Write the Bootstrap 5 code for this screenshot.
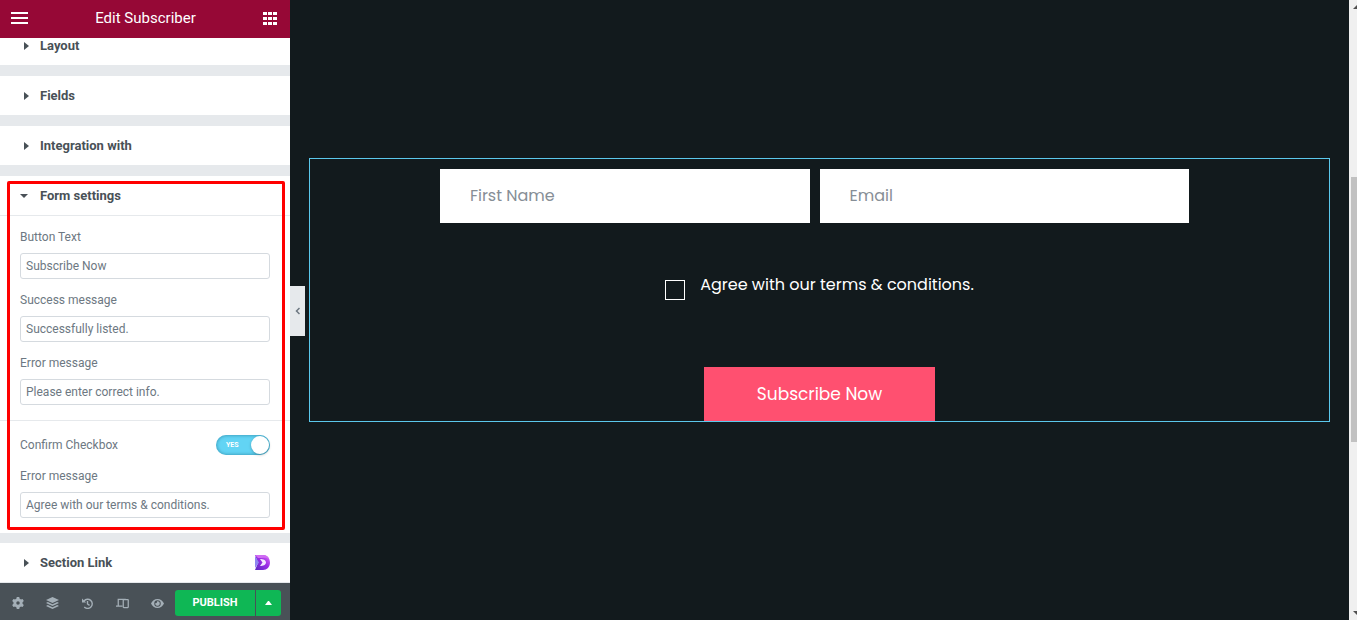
<!DOCTYPE html>
<html lang="en">
<head>
<meta charset="utf-8">
<meta name="viewport" content="width=device-width, initial-scale=1">
<title>Edit Subscriber</title>
<link rel="stylesheet" href="https://cdn.jsdelivr.net/npm/bootstrap@5.3.0/dist/css/bootstrap.min.css">
<style>
  body { font-family: Roboto, "Liberation Sans", sans-serif; font-size: 12px; line-height: 12px; color: #6d7882; background: #121a1d; }
  svg { display: block; }
  .panel { width: 290px; background: #e6e9ec; }
  .panel-head { height: 38px; padding: 0 13px 2px 11px; background: #960836; z-index: 1; }
  .panel-head h1 { font-size: 15px; line-height: 20px; }
  .bare { border: 0; padding: 0; background: none; color: inherit; }
  .sections { gap: 11px; }
  .sections > :first-child { margin-top: -12px; }
  .sec-btn { height: 39px; padding: 0 20px; font-size: 13px; font-weight: 700; color: #495157; background: #fff; }
  .sec-btn .caret { width: 20px; }
  .sec-body { padding: 15px 0; border-top: 1px solid #e6e9ec; }
  .settings { margin-bottom: -1px; }
  .ctl { padding: 0 20px; }
  .stack { gap: 15px; }
  .ctl label { display: block; margin-bottom: 10px; }
  .ctl .form-control { height: 26px; padding: 0 5px; font-size: 12px; border-color: #d5dadf; border-radius: 3px; color: #6d7882; }
  .divided { border-top: 1px solid #e6e9ec; padding-top: 14px; }
  .ctl .plain-label { margin: 0; }
  .switch-wrap { width: 54px; height: 20px; }
  .switch { appearance: none; margin: 0; width: 100%; height: 100%; border-radius: 10px; background: #62d4f4; box-shadow: inset 0 0 3px 1px rgba(20,100,130,.4); }
  .switch::after { content: ""; position: absolute; right: 1px; top: 1px; width: 18px; height: 18px; border-radius: 50%; background: #fff; box-shadow: 0 1px 3px rgba(0,0,0,.25); }
  .switch-text { left: 10px; top: 4px; font-size: 7px; font-weight: 700; color: #fff; pointer-events: none; }
  .highlight { left: 7px; top: 5px; right: 5px; bottom: 3px; border: 3px solid #f00; border-radius: 2px; pointer-events: none; }
  .panel-foot { height: 37px; background: #495157; color: #a4afb7; padding: 3px 9px 0 0; }
  .tool { width: 35px; height: 26px; }
  .pub { height: 26px; background: #0fb755; color: #fff; font-size: 11px; font-weight: 700; border: 0; padding: 0; }
  .pub-main { width: 80px; border-radius: 3px 0 0 3px; }
  .pub-more { width: 25px; border-radius: 0 3px 3px 0; }
  .collapse-tab { left: 0; top: 286px; width: 15px; height: 50px; background: #e6e9ec; color: #6d7882; }
  .preview { padding: 158px 19px 0; font-family: Poppins, Inter, "Open Sans", sans-serif; font-size: 16px; line-height: 24px; }
  .widget { border: 1px solid #5bc8ec; padding: 10px 10px 0; }
  .fields { width: 76%; }
  .fields > div { flex: 1 1 0; padding-right: 10px; }
  .fields .form-control { height: 54px; padding: 0 30px 2px; border: 0; border-radius: 0; font-size: 16px; }
  .fields .form-control::placeholder { color: #868e96; }
  .agree { gap: 15px; min-width: 305px; margin: 50px 0 67px; color: #fff; }
  .agree input { appearance: none; width: 20px; height: 20px; margin: 7px 0 0; border: 1px solid #fff; }
  .subscribe { width: 231px; height: 54px; border: 0; background: #ff5070; color: #fff; font-size: 17px; }
  .rail { width: 8px; background: #f0f0f0; padding: 0 0 0 2px; }
  .rail-thumb { margin-top: 168px; height: 265px; background: #c1c1c1; }
</style>
<script src="https://cdn.jsdelivr.net/npm/bootstrap@5.3.0/dist/js/bootstrap.bundle.min.js"></script>
</head>
<body>
<div class="d-flex vh-100 overflow-hidden">

  <aside class="panel d-flex flex-column flex-shrink-0">
    <header class="panel-head d-flex align-items-center justify-content-between text-white flex-shrink-0">
      <button class="bare" aria-label="Menu"><svg width="17" height="12" fill="#fff"><path d="M0 0h17v2H0zM0 5h17v2H0zM0 10h17v2H0z"/></svg></button>
      <h1 class="m-0 fw-normal">Edit Subscriber</h1>
      <button class="bare" aria-label="Widgets"><svg width="14" height="13" fill="#fff"><path d="M0 0h4v3H0zM5 0h4v3H5zM10 0h4v3h-4zM0 5h4v3H0zM5 5h4v3H5zM10 5h4v3h-4zM0 10h4v3H0zM5 10h4v3H5zM10 10h4v3h-4z"/></svg></button>
    </header>

    <div class="sections d-flex flex-column flex-grow-1 overflow-hidden">
      <button class="bare sec-btn d-flex align-items-center flex-shrink-0"><span class="caret"><svg width="12" height="8" fill="#495157"><path d="M4 0l5 4-5 4z"/></svg></span>Layout</button>
      <button class="bare sec-btn d-flex align-items-center flex-shrink-0"><span class="caret"><svg width="12" height="8" fill="#495157"><path d="M4 0l5 4-5 4z"/></svg></span>Fields</button>
      <button class="bare sec-btn d-flex align-items-center flex-shrink-0"><span class="caret"><svg width="12" height="8" fill="#495157"><path d="M4 0l5 4-5 4z"/></svg></span>Integration with</button>

      <section class="settings bg-white position-relative flex-shrink-0">
        <button class="bare sec-btn d-flex align-items-center w-100" aria-expanded="true"><span class="caret"><svg width="12" height="8" fill="#495157"><path d="M0 2h8l-4 4z"/></svg></span>Form settings</button>
        <div class="sec-body stack d-flex flex-column">
          <div class="ctl"><label for="btnText">Button Text</label><input id="btnText" class="form-control" type="text" value="Subscribe Now"></div>
          <div class="ctl"><label for="okMsg">Success message</label><input id="okMsg" class="form-control" type="text" value="Successfully listed."></div>
          <div class="ctl"><label for="errMsg">Error message</label><input id="errMsg" class="form-control" type="text" value="Please enter correct info."></div>
          <div class="ctl divided d-flex align-items-center justify-content-between">
            <label class="plain-label" for="confirm">Confirm Checkbox</label>
            <span class="switch-wrap position-relative"><input id="confirm" class="switch position-absolute" type="checkbox" role="switch" checked><span class="switch-text position-absolute">YES</span></span>
          </div>
          <div class="ctl"><label for="termsMsg">Error message</label><input id="termsMsg" class="form-control" type="text" value="Agree with our terms &amp; conditions."></div>
        </div>
        <div class="highlight position-absolute"></div>
      </section>

      <button class="bare sec-btn d-flex align-items-center flex-shrink-0"><span class="caret"><svg width="12" height="8" fill="#495157"><path d="M4 0l5 4-5 4z"/></svg></span>Section Link
        <svg class="ms-auto" width="15" height="15" viewBox="0 0 15 15"><defs><linearGradient id="lg" x1="0" y1="1" x2="1" y2="0"><stop offset="0" stop-color="#5a2bc0"/><stop offset=".55" stop-color="#9a2ce6"/><stop offset="1" stop-color="#e070f5"/></linearGradient></defs><path fill="url(#lg)" d="M0 0h8c4 0 7 3 7 7.500s-3 7.500-7 7.500H0l3-7z"/><path fill="#cf6cf2" d="M0 0h8c3 0 5 1 6 4-3-2-7-1-11-1z"/><path fill="#8f86f0" d="M0 1l4 6.500L0 13z"/><path fill="#f4e8ff" d="M5 4c3 0 6 1 6 3.500S8 11 5 11l2.500-3.500z"/></svg></button>
    </div>

    <footer class="panel-foot d-flex align-items-center flex-shrink-0">
      <button class="bare tool d-flex align-items-center justify-content-center" aria-label="Settings"><svg width="12" height="12" viewBox="0 0 24 24"><g fill="currentColor"><path fill-rule="evenodd" d="M12 3a9 9 0 1 0 0 18 9 9 0 0 0 0-18zm0 5.500a3.500 3.500 0 1 1 0 7 3.500 3.500 0 0 1 0-7z"/><path id="tooth" d="M9.500 0h5l1 5h-7z"/><use href="#tooth" transform="rotate(60 12 12)"/><use href="#tooth" transform="rotate(120 12 12)"/><use href="#tooth" transform="rotate(180 12 12)"/><use href="#tooth" transform="rotate(240 12 12)"/><use href="#tooth" transform="rotate(300 12 12)"/></g></svg></button>
      <button class="bare tool d-flex align-items-center justify-content-center" aria-label="Navigator"><svg width="13" height="12" viewBox="0 0 26 24" fill="currentColor"><path d="M13 0l13 6-13 6L0 6z"/><path d="M3.500 10L13 14.500 22.500 10l3.500 2-13 6-13-6z"/><path d="M3.500 16l9.500 4.500 9.500-4.500 3.500 2-13 6-13-6z"/></svg></button>
      <button class="bare tool d-flex align-items-center justify-content-center" aria-label="History"><svg width="11" height="11" viewBox="0 0 24 24" fill="none" stroke="currentColor" stroke-width="3"><path d="M4.500 6.500A10 10 0 1 1 5 19.500M12 6.500V13l4.500 3"/><path fill="currentColor" stroke="none" d="M0 1l9 9H0z"/></svg></button>
      <button class="bare tool d-flex align-items-center justify-content-center" aria-label="Responsive mode"><svg width="13" height="11" viewBox="0 0 26 22" fill="none" stroke="currentColor" stroke-width="2.500"><path d="M4.500 15V2.500h15M0 16h13"/><rect x="14.500" y="3" width="10" height="16" rx="1"/></svg></button>
      <button class="bare tool d-flex align-items-center justify-content-center" aria-label="Preview changes"><svg width="13" height="9" viewBox="0 0 26 18"><path fill="currentColor" fill-rule="evenodd" d="M13 0C7 0 2.500 3.500 0 9c2.500 5.500 7 9 13 9s10.500-3.500 13-9C23.500 3.500 19 0 13 0zm0 2.500a6.500 6.500 0 1 1 0 13 6.500 6.500 0 0 1 0-13z"/><path fill="currentColor" d="M13 4.500A4.500 4.500 0 1 1 8.700 8a2.500 2.500 0 0 0 3.300-3.300z"/></svg></button>
      <button class="pub pub-main">PUBLISH</button>
      <button class="pub pub-more ms-auto d-flex align-items-center justify-content-center" aria-label="Save options"><svg width="8" height="4" fill="#fff"><path d="M0 4l3-4h1l3 4z"/></svg></button>
    </footer>
  </aside>

  <main class="preview position-relative flex-grow-1">
    <button class="bare collapse-tab position-absolute d-flex align-items-center justify-content-center" aria-label="Hide panel"><svg width="5" height="8" fill="none" stroke="currentColor" stroke-width="1.500"><path d="M4.500 1l-3 3 3 3"/></svg></button>
    <form class="widget d-flex flex-column align-items-center">
      <div class="fields d-flex">
        <div><input class="form-control" type="text" placeholder="First Name" aria-label="First Name"></div>
        <div><input class="form-control" type="email" placeholder="Email" aria-label="Email"></div>
      </div>
      <div class="agree d-flex align-items-start"><input id="agree" type="checkbox"><label for="agree">Agree with our terms &amp; conditions.</label></div>
      <button class="subscribe" type="button">Subscribe Now</button>
    </form>
  </main>

  <div class="rail d-flex flex-column flex-shrink-0" aria-hidden="true">
    <svg class="flex-shrink-0 mt-1" width="6" height="5" fill="#505050"><path d="M2 5l4-4v4z"/></svg>
    <div class="rail-thumb flex-shrink-0"></div>
    <svg class="flex-shrink-0 mt-auto mb-1" width="6" height="5" fill="#505050"><path d="M2 0h4v4z"/></svg>
  </div>
</div>
</body>
</html>
